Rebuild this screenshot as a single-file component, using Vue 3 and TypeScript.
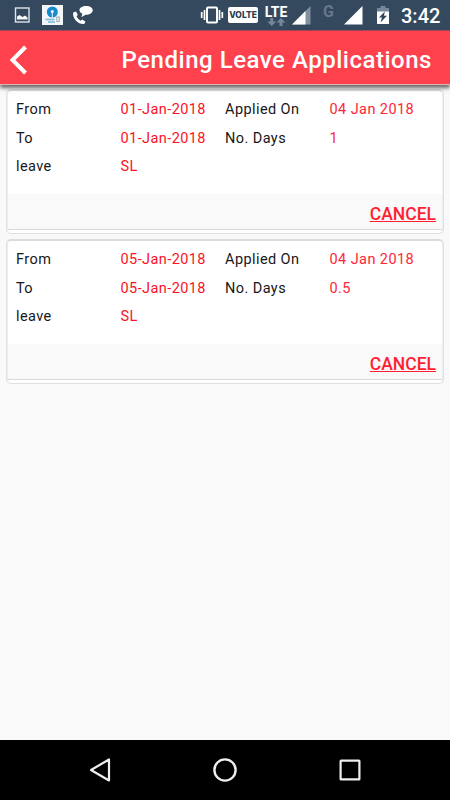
<script setup lang="ts">
interface LeaveApplication {
  id: number
  from: string
  to: string
  appliedOn: string
  days: string
  leave: string
}

const applications: LeaveApplication[] = [
  { id: 1, from: '01-Jan-2018', to: '01-Jan-2018', appliedOn: '04 Jan 2018', days: '1', leave: 'SL' },
  { id: 2, from: '05-Jan-2018', to: '05-Jan-2018', appliedOn: '04 Jan 2018', days: '0.5', leave: 'SL' },
]
</script>

<template>
  <div class="screen">
    <div class="status">
      <svg class="i-photo" width="16" height="16" viewBox="0 0 16 16">
        <rect x="1.500" y="1" width="13.500" height="14" fill="none" stroke="#dfe4e8" stroke-width="1.400" />
        <path d="M3 12.500V9.500L5.500 8l3 2 2.500-1.500 2.500 2v2z" fill="#f4f6f7" />
      </svg>
      <svg class="i-bank" width="21" height="20" viewBox="0 0 21 20">
        <rect width="21" height="20" fill="#f2f6f8" />
        <circle cx="10.300" cy="7" r="5.500" fill="#1689cf" />
        <circle cx="10.300" cy="6.600" r="1.500" fill="#eef7fc" />
        <path d="M9.800 7h1v6h-1z" fill="#eef7fc" />
        <path d="M3.500 14.500h9M6 17h7" stroke="#7bb8da" stroke-width="1.300" />
        <rect x="14.800" y="12" width="2.400" height="4.500" fill="none" stroke="#8c979e" stroke-width=".8" />
      </svg>
      <svg class="i-call" width="22" height="21" viewBox="0 0 22 21">
        <path d="M1.200 8.600 4 7.500 5.800 10.800 4.600 12.600Q6 15.300 8.600 16.700L10.400 15.500 13.500 17.700 12.200 20Q7.500 20.500 3.800 16.500 .4 12.500 1.200 8.600Z" fill="#fff" />
        <path d="M14.200 2c4 0 6.500 1.700 6.500 4.300S18 10.800 13.600 10.800L9.300 13.300l1.100-3.600C8.500 8.900 7.500 7.800 7.500 6.300 7.500 3.700 10.200 2 14.200 2Z" fill="#fff" />
      </svg>
      <span class="spacer"></span>
      <svg class="i-vibrate" width="24" height="18" viewBox="0 0 24 18">
        <rect x="7" y="1.500" width="10" height="15" rx="1" fill="none" stroke="#fff" stroke-width="2" />
        <path d="M4.500 4v10M19.500 4v10M1.700 6v6M22.300 6v6" stroke="#fff" stroke-width="1.700" />
      </svg>
      <span class="volte">VOLTE</span>
      <span class="lte">
        <span class="lte-text">LTE</span>
        <svg width="20" height="8" viewBox="0 0 20 8">
          <path d="M4.200 0h3v3.500h3L5.700 8 1.200 3.500h3zM13.500 8h3V4.500h3L15 0l-4.500 4.500h3z" fill="#75869a" />
        </svg>
      </span>
      <svg class="i-signal" width="19" height="19" viewBox="0 0 19 19">
        <path d="M0 18.500 18.500 0v18.500z" fill="#8090a0" />
        <path d="M0 18.500 13.500 5v13.500z" fill="#fff" />
      </svg>
      <span class="g">G</span>
      <svg class="i-signal2" width="19" height="19" viewBox="0 0 19 19">
        <path d="M0 18.500 18.500 0v18.500z" fill="#fff" />
      </svg>
      <svg class="i-battery" width="12" height="19" viewBox="0 0 12 19">
        <path d="M0 2h3.500V0h5v2H12v4H0z" fill="#75869a" />
        <path d="M0 5.500h12V18H0z" fill="#fff" />
        <path d="M7.800 5.500 2 11.500h3L3.500 16.500 10 9.800H7z" fill="#30465b" />
      </svg>
      <span class="time">3:42</span>
    </div>

    <header class="header">
      <svg class="back" width="20" height="32" viewBox="0 0 20 32">
        <path d="M17.500 3 4.500 16l13 13" fill="none" stroke="#fff" stroke-width="4" />
      </svg>
      <h1>Pending Leave Applications</h1>
    </header>

    <main class="list">
      <section v-for="item in applications" :key="item.id" class="card">
        <div class="fields">
          <span>From</span><span class="value">{{ item.from }}</span>
          <span>Applied On</span><span class="value soft">{{ item.appliedOn }}</span>
          <span>To</span><span class="value">{{ item.to }}</span>
          <span>No. Days</span><span class="value soft">{{ item.days }}</span>
          <span>leave</span><span class="value">{{ item.leave }}</span>
        </div>
        <div class="footer"><a class="cancel">CANCEL</a></div>
      </section>
    </main>

    <nav class="nav">
      <svg width="26" height="26" viewBox="0 0 26 26">
        <path d="M22 2.500v21L4 13z" fill="none" stroke="#eee" stroke-width="2.200" stroke-linejoin="round" />
      </svg>
      <svg width="26" height="26" viewBox="0 0 26 26">
        <circle cx="13" cy="13" r="10.600" fill="none" stroke="#eee" stroke-width="2.400" />
      </svg>
      <svg width="26" height="26" viewBox="0 0 26 26">
        <rect x="3.600" y="3.600" width="18.800" height="18.800" rx=".5" fill="none" stroke="#eee" stroke-width="2.200" />
      </svg>
    </nav>
  </div>
</template>

<style>
body {
  margin: 0;
}
</style>

<style scoped>
.screen {
  width: 450px;
  height: 800px;
  display: flex;
  flex-direction: column;
  overflow: hidden;
  background: #f9f9f9;
  font-family: Roboto, "Liberation Sans", sans-serif;
}
svg {
  display: block;
  flex: none;
}
.status {
  height: 30px;
  flex: none;
  display: flex;
  align-items: flex-start;
  background: #34495e;
  color: #fff;
  box-sizing: border-box;
  padding-right: 10px;
}
.spacer { flex: 1; }
.i-photo { margin: 7px 0 0 14px; }
.i-bank { margin: 5px 0 0 12px; }
.i-call { margin: 4px 0 0 9px; }
.i-vibrate { margin: 6px 4px 0 0; }
.volte {
  width: 30px;
  height: 16px;
  margin: 7px 6px 0 0;
  border-radius: 2px;
  background: #fff;
  color: #263e54;
  font-family: Inter, Roboto, sans-serif;
  font-size: 8.500px;
  line-height: 16px;
  font-weight: 800;
  text-align: center;
}
.lte {
  width: 24px;
  margin: 5px 4px 0 0;
  display: flex;
  flex-direction: column;
  align-items: center;
}
.lte-text {
  height: 13px;
  font-size: 14px;
  line-height: 14px;
  font-weight: 700;
}
.i-signal { margin: 6px 12px 0 0; }
.g {
  width: 12px;
  margin-right: 9px;
  color: #65788c;
  font-size: 16px;
  line-height: 23px;
  font-weight: 700;
}
.i-signal2 { margin: 6px 14px 0 0; }
.i-battery { margin: 6px 12px 0 0; }
.time {
  width: 39px;
  font-size: 20px;
  line-height: 32px;
  font-weight: 500;
}
.header {
  height: 54px;
  flex: none;
  position: relative;
  z-index: 1;
  display: flex;
  align-items: center;
  justify-content: space-between;
  box-sizing: border-box;
  padding: 5px 18px 0 8px;
  border-top: 1px solid #a54254;
  background: #ff414d;
  color: #fff;
  box-shadow: 0 1px 0 #e0b2b4, 0 4px 4px #666;
}
h1 {
  margin: 0;
  font-size: 24px;
  line-height: 30px;
  font-weight: 500;
  letter-spacing: 0.520px;
  white-space: nowrap;
}
.list {
  flex: 1;
  display: flex;
  flex-direction: column;
  gap: 5px;
  padding: 5px 6px 0;
}
.card {
  height: 145px;
  box-sizing: border-box;
  display: flex;
  flex-direction: column;
  border: 1px solid #e0e0e0;
  border-top: 2px solid #dcdcdc;
  border-radius: 5px;
  background: #fff;
  box-shadow: inset 1px 0 #eee, inset -1px 0 #eee;
}
.fields {
  height: 103px;
  box-sizing: border-box;
  display: grid;
  grid-template-columns: 104.500px 104.500px 104.500px 1fr;
  grid-auto-rows: 28.700px;
  padding: 4px 0 0 9px;
  font-size: 14.500px;
  line-height: 29px;
  letter-spacing: 0.420px;
  color: #171717;
  white-space: nowrap;
}
.value { color: #fb1224; }
.value.soft { color: #ff2636; }
.footer {
  height: 36px;
  box-sizing: border-box;
  margin: 0 1px;
  display: flex;
  align-items: center;
  justify-content: flex-end;
  padding: 5px 6px 0 0;
  background: #f9f9f9;
  border-bottom: 1px solid #d8d8d8;
}
.cancel {
  color: #ff1e32;
  font-size: 17.500px;
  line-height: 20px;
  font-weight: 500;
  text-decoration: underline;
  text-decoration-thickness: 1px;
  text-underline-offset: 1px;
}
.nav {
  height: 60px;
  flex: none;
  display: flex;
  align-items: center;
  justify-content: space-between;
  box-sizing: border-box;
  padding: 0 87px;
  background: #000;
}
</style>
